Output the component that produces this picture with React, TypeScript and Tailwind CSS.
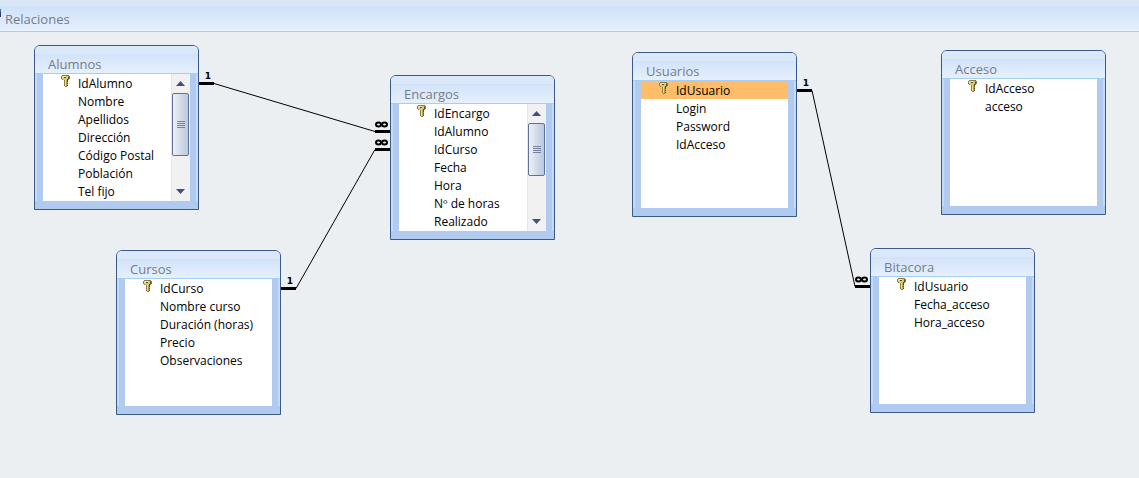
import { useState } from "react";

interface TableNode {
	name: string;
	fields: string[];
	position: string;
	thumb?: string;
}

interface Relation {
	id: string;
	from: [number, number];
	to: [number, number];
}

const STUB_LENGTH = 15;

const TABLES: TableNode[] = [
	{
		name: "Alumnos",
		fields: [
			"IdAlumno",
			"Nombre",
			"Apellidos",
			"Dirección",
			"Código Postal",
			"Población",
			"Tel fijo",
		],
		position: "left-[34px] top-[13px]",
		thumb: "h-[63px]",
	},
	{
		name: "Encargos",
		fields: [
			"IdEncargo",
			"IdAlumno",
			"IdCurso",
			"Fecha",
			"Hora",
			"Nº de horas",
			"Realizado",
		],
		position: "left-[390px] top-[43px]",
		thumb: "h-[53px]",
	},
	{
		name: "Usuarios",
		fields: ["IdUsuario", "Login", "Password", "IdAcceso"],
		position: "left-[632px] top-[20px]",
	},
	{
		name: "Acceso",
		fields: ["IdAcceso", "acceso"],
		position: "left-[941px] top-[18px]",
	},
	{
		name: "Cursos",
		fields: [
			"IdCurso",
			"Nombre curso",
			"Duración (horas)",
			"Precio",
			"Observaciones",
		],
		position: "left-[116px] top-[218px]",
	},
	{
		name: "Bitacora",
		fields: ["IdUsuario", "Fecha_acceso", "Hora_acceso"],
		position: "left-[870px] top-[216px]",
	},
];

// "from" is the one side, "to" is the many side
const RELATIONS: Relation[] = [
	{ id: "alumnos-encargos", from: [199, 51], to: [390, 99] },
	{ id: "cursos-encargos", from: [281, 256], to: [390, 117] },
	{ id: "usuarios-bitacora", from: [797, 58], to: [870, 254] },
];

function KeyIcon() {
	return (
		<svg
			viewBox="0 0 9 12"
			className="h-3 w-[9px] flex-none"
			shapeRendering="crispEdges"
			role="img"
			aria-label="Clave principal"
		>
			<path
				d="M1 0h7v1h1v3h-1v1h-1v6h-1v1h-2v-1h-1v-6h-2v-1h-1v-3h1z"
				fill="#8a7a45"
			/>
			<path d="M1 1h6v3h-1v1h-4v-1h-1z" fill="#d6cb78" />
			<path d="M2 1h3v1h-3zM1 2h1v1h-1z" fill="#f3eebf" />
			<path d="M3 2h2v1h-2z" fill="#5a4a1c" />
			<path d="M7 2h1v2h-1zM6 4h1v7h-1z" fill="#5f4a1a" />
			<path d="M4 5h1v6h-1z" fill="#efe08a" />
			<path d="M5 5h1v6h-1z" fill="#c2a03a" />
			<path d="M6 7h1v1h-1zM6 9h1v1h-1z" fill="#a8873a" />
		</svg>
	);
}

function ScrollBar({ thumb }: { thumb: string }) {
	return (
		<div className="flex w-[19px] flex-none flex-col border-l border-[#e6e6e6] bg-[#f1f1f1] pr-px">
			<button
				type="button"
				aria-label="Subir"
				className="flex h-[19px] flex-none items-center justify-center"
			>
				<svg viewBox="0 0 9 5" className="h-[5px] w-[9px]">
					<path d="M4.5 0 9 5H0z" fill="#43507f" />
				</svg>
			</button>
			<div
				className={`flex flex-none flex-col items-center justify-center gap-px rounded-xs border border-[#5f7196] bg-linear-to-r from-[#eef2f7] via-[#d3dce8] to-[#b9c9dd] ${thumb}`}
			>
				<span className="h-px w-2 bg-[#74839f]" />
				<span className="h-px w-2 bg-[#74839f]" />
				<span className="h-px w-2 bg-[#74839f]" />
				<span className="h-px w-2 bg-[#74839f]" />
			</div>
			<button
				type="button"
				aria-label="Bajar"
				className="mt-auto flex h-[19px] flex-none items-center justify-center"
			>
				<svg viewBox="0 0 9 5" className="h-[5px] w-[9px]">
					<path d="M0 0h9L4.5 5z" fill="#43507f" />
				</svg>
			</button>
		</div>
	);
}

interface TableWindowProps {
	table: TableNode;
	selected: string | null;
	onSelect: (id: string) => void;
}

function TableWindow({ table, selected, onSelect }: TableWindowProps) {
	return (
		<section
			className={`absolute flex h-[165px] w-[165px] flex-col overflow-hidden rounded-t-md border border-[#3b5a87] bg-[#b1caf0] ${table.position}`}
		>
			<header className="h-7 flex-none border-b border-[#a5cdf5] bg-linear-to-b from-[#c9ddf7] to-[#e6f0fd]">
				<div className="h-2 bg-[#dbe8f9]" />
				<h2 className="pl-[13px] text-[13px] leading-5 text-[#747c8a]">
					{table.name}
				</h2>
			</header>
			<div className="mb-2 flex min-h-0 flex-1 border-x-2 border-[#c6daf6] px-1.5">
				<ul className="min-w-0 flex-1 bg-white">
					{table.fields.map((field, i) => {
						const id = `${table.name}.${field}`;
						return (
							<li key={field}>
								<button
									type="button"
									onClick={() => onSelect(id)}
									className={`flex h-[18px] w-full text-left text-[12px] leading-5 whitespace-nowrap text-black ${
										selected === id ? "bg-[#ffbd69]" : ""
									}`}
								>
									<span className="w-[35px] flex-none pt-px pl-[18px]">
										{i === 0 && <KeyIcon />}
									</span>
									{field}
								</button>
							</li>
						);
					})}
				</ul>
				{table.thumb && <ScrollBar thumb={table.thumb} />}
			</div>
		</section>
	);
}

function RelationLine({ relation }: { relation: Relation }) {
	const [x1, y1] = relation.from;
	const [x2, y2] = relation.to;
	const startX = x1 + STUB_LENGTH;
	const endX = x2 - STUB_LENGTH;

	return (
		<g stroke="#000" fill="none">
			<path
				d={`M${x1} ${y1 + 0.5}H${startX}M${endX} ${y2 + 0.5}H${x2}`}
				strokeWidth="3"
			/>
			<path d={`M${startX} ${y1 + 0.5}L${endX} ${y2 + 0.5}`} strokeWidth="1" />
			<ellipse cx={endX + 3.5} cy={y2 - 6.5} rx="2.5" ry="2" strokeWidth="2" />
			<ellipse cx={endX + 9.5} cy={y2 - 6.5} rx="2.5" ry="2" strokeWidth="2" />
			<text
				x={x1 + 9}
				y={y1 - 4}
				textAnchor="middle"
				className="fill-black stroke-none font-['DejaVu_Sans',sans-serif] text-[9px] font-bold"
			>
				1
			</text>
		</g>
	);
}

function App() {
	const [selected, setSelected] = useState<string | null>("Usuarios.IdUsuario");

	return (
		<div className="flex min-h-screen flex-col bg-[#ebeff2] font-['Open_Sans',sans-serif]">
			<header className="h-8 flex-none border-b border-[#a5cdf5] bg-linear-to-b from-[#c9ddf7] to-[#e6f0fd]">
				<div className="h-1.5 bg-[#d8e6f8]" />
				<div className="flex items-start gap-1">
					<span className="mt-[3px] h-2 w-px border-t-3 border-[#3f6fd0] bg-[#2b3d63]" />
					<h1 className="text-[13px] leading-[26px] text-[#747c8a]">
						Relaciones
					</h1>
				</div>
			</header>

			<main className="relative flex-1">
				<svg className="absolute inset-0 h-full w-full" aria-hidden="true">
					{RELATIONS.map((relation) => (
						<RelationLine key={relation.id} relation={relation} />
					))}
				</svg>
				{TABLES.map((table) => (
					<TableWindow
						key={table.name}
						table={table}
						selected={selected}
						onSelect={setSelected}
					/>
				))}
			</main>
		</div>
	);
}

export default App;
